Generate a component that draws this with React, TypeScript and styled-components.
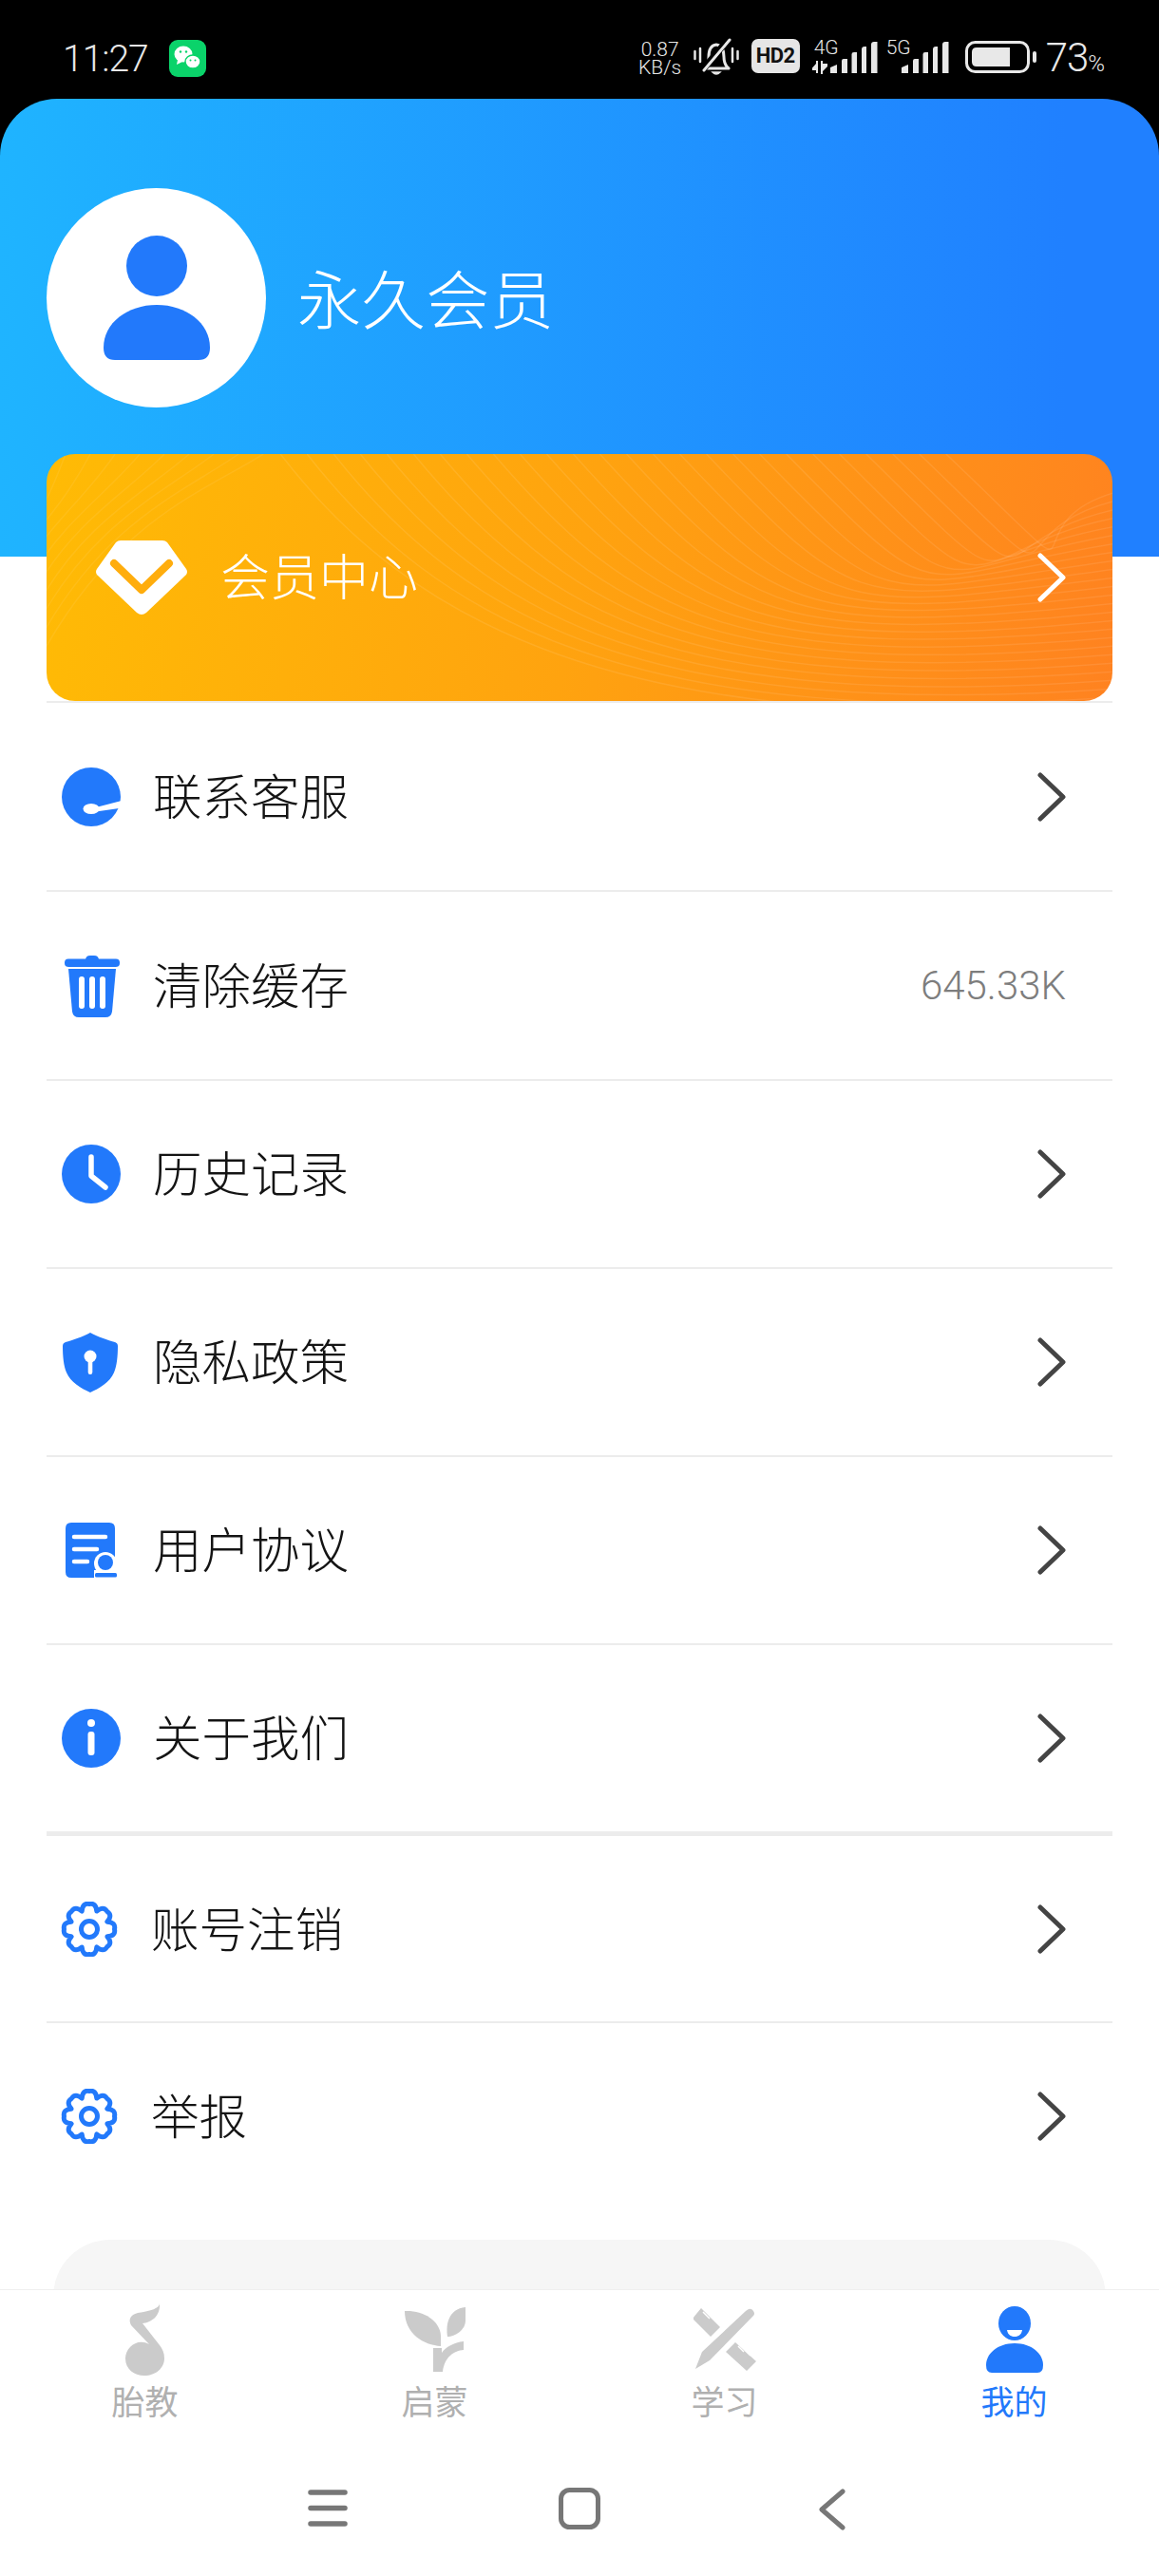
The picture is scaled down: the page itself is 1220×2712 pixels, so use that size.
import React from 'react';
import styled, { createGlobalStyle } from 'styled-components';

const BLUE = '#2279fb';
const CJK = `Roboto, "Noto Sans CJK SC", sans-serif`;

const Global = createGlobalStyle`
  html, body { margin: 0; padding: 0; background: #fff; }
  * { box-sizing: border-box; }
`;

const Page = styled.div`
  width: 1220px;
  height: 2712px;
  display: flex;
  flex-direction: column;
  overflow: hidden;
  background: #000;
  font-family: ${CJK};
`;

const StatusBar = styled.div`
  height: 104px;
  flex: none;
  display: flex;
  align-items: flex-start;
  justify-content: space-between;
  padding: 40px 57px 0 66px;
  color: #e8e8e8;
`;
const StatusLeft = styled.div`
  display: flex;
  align-items: center;
  gap: 22px;
`;
const Clock = styled.span`
  font-size: 39px;
  font-weight: 300;
  line-height: 40px;
  letter-spacing: -1px;
  margin-top: 2px;
`;
const StatusRight = styled.div`
  display: flex;
  align-items: flex-start;
`;
const Speed = styled.div`
  width: 46px;
  font-size: 21px;
  font-weight: 300;
  line-height: 19px;
  text-align: center;
  margin-top: 3px;
  margin-right: 12px;
`;
const HdBadge = styled.div`
  width: 51px;
  height: 36px;
  border-radius: 7px;
  background: #e6e6e6;
  color: #111;
  font-size: 22px;
  font-weight: 700;
  line-height: 36px;
  text-align: center;
  margin: 1px 13px 0 13px;
  letter-spacing: -0.5px;
`;
const SignalGroup = styled.div`
  position: relative;
  display: flex;
  width: ${p => p.$w}px;
  height: 38px;
  margin-right: ${p => p.$mr}px;
`;
const SignalLabel = styled.span`
  position: absolute;
  left: ${p => p.$left}px;
  top: 0;
  font-size: 21px;
  font-weight: 300;
  line-height: 20px;
`;
const Percent = styled.span`
  font-size: 42px;
  font-weight: 300;
  line-height: 42px;
  margin-left: 9px;
  letter-spacing: -1px;
  small {
    font-size: 24px;
    letter-spacing: 0;
  }
`;

const Main = styled.div`
  flex: 1;
  min-height: 0;
  overflow: hidden;
  background: #fff;
  display: flex;
  flex-direction: column;
`;
const HeaderBack = styled.div`
  background: #000;
  flex: none;
  height: 482px;
`;
const HeaderBody = styled.div`
  height: 482px;
  background: linear-gradient(90deg, #1fb4ff 0%, #2080ff 92%);
  border-radius: 60px 60px 0 0;
  padding: 94px 49px 0;
  display: flex;
  align-items: flex-start;
  gap: 33px;
`;
const Avatar = styled.div`
  width: 231px;
  height: 231px;
  flex: none;
  border-radius: 50%;
  background: #fff;
  display: flex;
  align-items: center;
  justify-content: center;
`;
const UserName = styled.div`
  color: #fff;
  font-size: 67.5px;
  line-height: 90px;
  font-weight: 300;
  margin-top: 75px;
`;
const VipCard = styled.div`
  position: relative;
  flex: none;
  height: 260px;
  margin: -108px 49px 0 49px;
  border-radius: 30px;
  overflow: hidden;
  background: linear-gradient(100deg, #ffbb05 0%, #ffa30f 50%, #ff8220 100%);
  display: flex;
  align-items: center;
  padding: 0 49px 0 51px;
  color: #fff;
`;
const CardPattern = styled.svg`
  position: absolute;
  inset: 0;
  width: 100%;
  height: 100%;
`;
const VipTitle = styled.span`
  position: relative;
  font-size: 52px;
  font-weight: 300;
  line-height: 60px;
  margin-left: 34px;
  flex: 1;
  padding-top: 3px;
`;
const List = styled.div`
  display: flex;
  flex-direction: column;
  padding: 0 49px;
`;
const Row = styled.div`
  height: ${p => p.$h}px;
  flex: none;
  display: flex;
  align-items: center;
  border-top: ${p => p.$line}px solid #ececec;
  padding-right: 49px;
  color: #141414;
`;
const IconSlot = styled.div`
  width: ${p => p.$w}px;
  flex: none;
  display: flex;
  padding-left: ${p => p.$pl}px;
`;
const RowLabel = styled.span`
  flex: 1;
  font-size: ${p => p.$size}px;
  font-weight: 300;
  line-height: 70px;
  padding-top: 4px;
`;
const RowValue = styled.span`
  font-size: 42px;
  font-weight: 300;
  color: #7d7d7d;
`;
const Teaser = styled.div`
  flex: none;
  height: 60px;
  margin: 32px 56px 0;
  border-radius: 70px 70px 0 0;
  background: #f6f6f6;
`;
const TabBar = styled.div`
  flex: none;
  height: 142px;
  background: #fff;
  border-top: 1px solid #efefef;
  display: grid;
  grid-template-columns: repeat(4, 1fr);
`;
const Tab = styled.div`
  display: flex;
  flex-direction: column;
  align-items: center;
  padding-top: 13px;
  color: ${p => (p.$active ? BLUE : '#b0b0b0')};
`;
const TabIcon = styled.div`
  height: 78px;
  display: flex;
  align-items: center;
  justify-content: center;
`;
const TabLabel = styled.span`
  font-size: 35px;
  line-height: 44px;
  font-weight: 400;
  margin-top: 7px;
`;
const NavBar = styled.div`
  flex: none;
  height: 160px;
  background: #fff;
  display: flex;
  align-items: flex-start;
  padding: 68px 0 0 324px;
`;
const NavIcon = styled.svg`
  display: block;
  flex: none;
  margin-left: ${p => p.$ml}px;
  margin-top: ${p => p.$mt}px;
`;
const ChevronSvg = styled.svg`
  position: relative;
  flex: none;
`;
const GemSvg = styled.svg`
  position: relative;
  flex: none;
`;

const Chevron = ({ color }: { color: string }) => (
  <ChevronSvg width="30" height="52" viewBox="0 0 30 52">
    <path d="M3 3 L27 26 L3 49" fill="none" stroke={color} strokeWidth="5" strokeLinecap="round" strokeLinejoin="round" />
  </ChevronSvg>
);

const WeChat = () => (
  <svg width="39" height="39" viewBox="0 0 39 39">
    <rect width="39" height="39" rx="9" fill="#0ad36a" />
    <ellipse cx="15" cy="15" rx="9.5" ry="8.5" fill="#fff" />
    <path d="M9 21 L8 26 L14 23Z" fill="#fff" />
    <ellipse cx="25" cy="23" rx="8" ry="7" fill="#fff" stroke="#0ad36a" strokeWidth="1.5" />
    <circle cx="12" cy="12.5" r="1.2" fill="#0ad36a" />
    <circle cx="18" cy="12.5" r="1.2" fill="#0ad36a" />
    <circle cx="22.5" cy="21.5" r="1" fill="#0ad36a" />
    <circle cx="27.5" cy="21.5" r="1" fill="#0ad36a" />
  </svg>
);

const MutedBell = () => (
  <svg width="48" height="42" viewBox="0 0 48 42" fill="none" stroke="#e8e8e8">
    <path d="M1.500 14v8M7 11v14M41 11v14M46.500 14v8" strokeWidth="2.500" strokeLinecap="round" />
    <path d="M13 32 Q16 28 16 20 Q16 8 24 7 Q32 8 32 20 Q32 28 37 32 Z" strokeWidth="3" strokeLinejoin="round" />
    <path d="M20 36 Q24 40 28 36Z" fill="#e8e8e8" strokeWidth="1.500" />
    <path d="M37 1 L10 33" stroke="#000" strokeWidth="7" />
    <path d="M38 2 L11 34" strokeWidth="3" strokeLinecap="round" />
  </svg>
);

const BarsSvg = styled.svg`
  position: absolute;
  right: 0;
  top: 4px;
`;
const ArrowsSvg = styled.svg`
  position: absolute;
  left: 0;
  top: 24px;
`;
const BatterySvg = styled.svg`
  margin-top: 3px;
`;

const Bars = () => (
  <BarsSvg width="52" height="34" viewBox="0 0 52 34">
    <path d="M1 33V27L8 24V33Z M13 33V20Q13 18 15 18H19V33Z M23.500 33V13Q23.500 11 26 11H29V33Z M34 33V8Q34 5 37 5H39V33Z M44 33V3Q44 0 47 0H50.500V33Z" fill="#e8e8e8" />
  </BarsSvg>
);

const Arrows = () => (
  <ArrowsSvg width="16" height="14" viewBox="0 0 16 14">
    <path d="M6 0V13H4V10H0V7.500L4 3V0ZM9 0H11V3H16V6L11 11V14H9Z" fill="#e8e8e8" />
  </ArrowsSvg>
);

const Battery = () => (
  <BatterySvg width="76" height="34" viewBox="0 0 76 34">
    <rect x="1.500" y="1.500" width="65" height="31" rx="9" fill="none" stroke="#e8e8e8" strokeWidth="3" />
    <path d="M7 12Q7 7 12 7H47V27H12Q7 27 7 22Z" fill="#e8e8e8" />
    <rect x="71" y="11" width="4" height="12" rx="2" fill="#e8e8e8" />
  </BatterySvg>
);

const Person = () => (
  <svg width="112" height="131" viewBox="0 0 112 131">
    <circle cx="56" cy="32" r="32" fill={BLUE} />
    <path d="M0 118 C0 92 25 73 56 73 C87 73 112 92 112 118 Q112 131 100 131 H12 Q0 131 0 118Z" fill={BLUE} />
  </svg>
);

const VipGem = () => (
  <GemSvg width="98" height="80" viewBox="0 0 98 80">
    <path d="M27 1 H71 Q74 1 76 3 L96 31 Q98 34 96 37 L54 77 Q49 81 44 77 L2 37 Q0 34 2 31 L22 3 Q24 1 27 1Z" fill="#fff" />
    <path d="M20 25 L49 53 L78 25" fill="none" stroke="#ffad0d" strokeWidth="8" strokeLinecap="round" strokeLinejoin="round" />
  </GemSvg>
);

const IconSpoon = () => (
  <svg width="62" height="62" viewBox="0 0 62 62">
    <circle cx="31" cy="31" r="31" fill={BLUE} />
    <ellipse cx="31" cy="43.500" rx="8.500" ry="5.500" fill="#fff" />
    <path d="M36 42 L63 35 V42.500 L36 46.500Z" fill="#fff" />
  </svg>
);
const IconTrash = () => (
  <svg width="58" height="66" viewBox="0 0 58 66">
    <path d="M22 6 Q22 1 27 1 H31 Q36 1 36 6Z" fill={BLUE} />
    <rect y="4.500" width="58" height="8.500" rx="4" fill={BLUE} />
    <path d="M4 15 H54 L50 60 Q49 66 43 66 H15 Q9 66 8 60Z" fill={BLUE} />
    <rect x="15" y="23" width="6" height="34" rx="3" fill="#fff" />
    <rect x="26" y="23" width="6" height="34" rx="3" fill="#fff" />
    <rect x="37" y="23" width="6" height="34" rx="3" fill="#fff" />
  </svg>
);
const IconClock = () => (
  <svg width="62" height="62" viewBox="0 0 62 62">
    <circle cx="31" cy="31" r="31" fill={BLUE} />
    <path d="M31 13 V33 L46 45" fill="none" stroke="#fff" strokeWidth="5.500" strokeLinecap="round" strokeLinejoin="round" />
  </svg>
);
const IconShield = () => (
  <svg width="58" height="63" viewBox="0 0 58 63">
    <path d="M29 0 C36 4 48 8 55 10 Q58 11 58 14 C58 25 57 35 54 42 C50 52 38 59 29 63 C20 59 8 52 4 42 C1 35 0 25 0 14 Q0 11 3 10 C10 8 22 4 29 0Z" fill={BLUE} />
    <circle cx="29" cy="25" r="6.500" fill="#fff" />
    <rect x="26.700" y="26" width="4.600" height="18" rx="2.300" fill="#fff" />
  </svg>
);
const IconDoc = () => (
  <svg width="54" height="58" viewBox="0 0 54 58">
    <path d="M6 0 H46 Q52 0 52 6 V36 H36 L30 58 H6 Q0 58 0 52 V6 Q0 0 6 0Z" fill={BLUE} />
    <path d="M9 15 H42 M9 28 H33 M9 41 H23" stroke="#fff" strokeWidth="4.500" strokeLinecap="round" />
    <circle cx="42" cy="43" r="12" fill="#fff" />
    <circle cx="42" cy="42" r="8" fill={BLUE} />
    <rect x="30" y="50" width="24" height="8" fill="#fff" />
    <rect x="31" y="53" width="23" height="4.500" rx="1.500" fill={BLUE} />
  </svg>
);
const IconInfo = () => (
  <svg width="62" height="62" viewBox="0 0 62 62">
    <circle cx="31" cy="31" r="31" fill={BLUE} />
    <circle cx="31" cy="15" r="4" fill="#fff" />
    <rect x="27.500" y="24" width="7" height="25" rx="3" fill="#fff" />
  </svg>
);
const IconGear = () => {
  const pt = (r: number, d: number) => {
    const t = (d * Math.PI) / 180;
    return `${(30 + r * Math.cos(t)).toFixed(1)} ${(29 + r * Math.sin(t)).toFixed(1)}`;
  };
  let d = `M${pt(20.5, -22.5 - 90)}`;
  for (let i = 0; i < 8; i += 1) {
    const a = i * 45 - 90;
    d += ` Q${pt(29, a - 14)} ${pt(26.5, a)} Q${pt(29, a + 14)} ${pt(20.5, a + 22.5)}`;
  }
  return (
    <svg width="60" height="58" viewBox="0 0 60 58">
      <path d={`${d}Z`} fill="none" stroke={BLUE} strokeWidth="5" strokeLinejoin="round" />
      <circle cx="30" cy="29" r="8.500" fill="none" stroke={BLUE} strokeWidth="5" />
    </svg>
  );
};

const TabNote = () => (
  <svg width="44" height="76" viewBox="0 0 44 76">
    <path d="M37 0 C37 5 28 8 14 10 C6 12 4 17 7 23 L26 43 C14 36 1 46 1 58 C1 69 10 76 21 76 C33 76 42 68 42 58 C42 52 40 48 37 44 L19 21 C28 20 38 14 37 0Z" fill="#cbcbcb" />
  </svg>
);
const TabSprout = () => (
  <svg width="64" height="68" viewBox="0 0 64 68">
    <path d="M0 4 C18 3 37 13 38 30 L38 41 C20 40 0 28 0 4Z" fill="#cbcbcb" />
    <path d="M64 0 V14 C64 24 53 31 45 31 C43 18 46 2 64 0Z" fill="#cbcbcb" />
    <path d="M30 68 V43 L39 43 V48 C43 42 52 37 62 36 V45 C52 46 42 52 40 68Z" fill="#cbcbcb" />
  </svg>
);
const TabStudy = () => (
  <svg width="66" height="66" viewBox="0 0 66 66">
    <path d="M8 0 L28 20 L18 30 L-1 11Z M44 36 L66 56 L56 66 L34 46Z" fill="#cbcbcb" />
    <path d="M58 1 Q61 0 63 3 Q65 6 63 8 L17 55 L2 64 L9 46 L55 3Z" fill="#cbcbcb" />
    <path d="M10 4 L17 11 M16 1 L21 8 M47 40 L53 46 M54 44 L60 50" stroke="#fff" strokeWidth="1.500" />
  </svg>
);
const TabPerson = () => (
  <svg width="60" height="70" viewBox="0 0 60 70">
    <ellipse cx="30" cy="18" rx="17" ry="18" fill={BLUE} />
    <path d="M22 25 H38 C37 31 33 32 30 32 C27 32 23 31 22 25Z" fill="#fff" />
    <path d="M0 62 C0 50 12 39 30 39 C48 39 60 50 60 62 Q60 70 54 70 H6 Q0 70 0 62Z" fill={BLUE} />
  </svg>
);

const rows = [
  { label: '联系客服', Icon: IconSpoon, pl: 16, h: 199, line: 2, size: 51.5, w: 112 },
  { label: '清除缓存', Icon: IconTrash, pl: 19, h: 199, line: 2, size: 51.5, w: 112, value: '645.33K' },
  { label: '历史记录', Icon: IconClock, pl: 16, h: 198, line: 2, size: 51.5, w: 112 },
  { label: '隐私政策', Icon: IconShield, pl: 17, h: 198, line: 2, size: 51.5, w: 112 },
  { label: '用户协议', Icon: IconDoc, pl: 20, h: 198, line: 2, size: 51.5, w: 112 },
  { label: '关于我们', Icon: IconInfo, pl: 16, h: 198, line: 2, size: 51.5, w: 112 },
  { label: '账号注销', Icon: IconGear, pl: 15, h: 200, line: 5, size: 50.5, w: 110 },
  { label: '举报', Icon: IconGear, pl: 15, h: 198, line: 2, size: 50.5, w: 110 },
];

const arcs = Array.from({ length: 26 }, (_, i) => i);

export default function App() {
  return (
    <Page>
      <Global />
      <StatusBar>
        <StatusLeft>
          <Clock>11:27</Clock>
          <WeChat />
        </StatusLeft>
        <StatusRight>
          <Speed>0.87<br />KB/s</Speed>
          <MutedBell />
          <HdBadge>HD2</HdBadge>
          <SignalGroup $w={70} $mr={8}>
            <SignalLabel $left={2}>4G</SignalLabel>
            <Arrows />
            <Bars />
          </SignalGroup>
          <SignalGroup $w={67} $mr={16}>
            <SignalLabel $left={0}>5G</SignalLabel>
            <Bars />
          </SignalGroup>
          <Battery />
          <Percent>73<small>%</small></Percent>
        </StatusRight>
      </StatusBar>
      <Main>
        <HeaderBack>
          <HeaderBody>
            <Avatar><Person /></Avatar>
            <UserName>永久会员</UserName>
          </HeaderBody>
        </HeaderBack>
        <VipCard>
          <CardPattern viewBox="0 0 1121 260" preserveAspectRatio="none">
            {arcs.map(i => (
              <path
                key={i}
                d={`M${246 + i * 28} 0 C ${380 + i * 30} 175, ${600 + i * 16} ${300 - i * 9}, 1125 ${265 - i * 9}`}
                fill="none"
                stroke="#fff"
                strokeOpacity="0.09"
                strokeWidth="1.500"
              />
            ))}
            {arcs.slice(0, 9).map(i => (
              <path key={i} d={`M${i * 26 + 20} 0 C ${i * 20 + 5} 40, ${i * 10 - 10} 70, -10 ${60 + i * 20}`} fill="none" stroke="#fff" strokeOpacity="0.07" strokeWidth="1.500" />
            ))}
          </CardPattern>
          <VipGem />
          <VipTitle>会员中心</VipTitle>
          <Chevron color="#fff" />
        </VipCard>
        <List>
          {rows.map(r => (
            <Row key={r.label} $h={r.h} $line={r.line}>
              <IconSlot $w={r.w} $pl={r.pl}><r.Icon /></IconSlot>
              <RowLabel $size={r.size}>{r.label}</RowLabel>
              {r.value ? <RowValue>{r.value}</RowValue> : <Chevron color="#444" />}
            </Row>
          ))}
        </List>
        <Teaser />
      </Main>
      <TabBar>
        <Tab><TabIcon><TabNote /></TabIcon><TabLabel>胎教</TabLabel></Tab>
        <Tab><TabIcon><TabSprout /></TabIcon><TabLabel>启蒙</TabLabel></Tab>
        <Tab><TabIcon><TabStudy /></TabIcon><TabLabel>学习</TabLabel></Tab>
        <Tab $active><TabIcon><TabPerson /></TabIcon><TabLabel>我的</TabLabel></Tab>
      </TabBar>
      <NavBar>
        <NavIcon $ml={0} $mt={0} width="42" height="40" viewBox="0 0 42 40">
          <path d="M3 4 H39 M3 20.500 H39 M3 37 H39" stroke="#777" strokeWidth="5.500" strokeLinecap="round" />
        </NavIcon>
        <NavIcon $ml={222} $mt={-1} width="44" height="44" viewBox="0 0 44 44">
          <rect x="2.500" y="2.500" width="39" height="39" rx="9" fill="none" stroke="#777" strokeWidth="5" />
        </NavIcon>
        <NavIcon $ml={229} $mt={0} width="30" height="44" viewBox="0 0 30 44">
          <path d="M26 3 L4 22 L26 41" fill="none" stroke="#777" strokeWidth="5" strokeLinecap="round" strokeLinejoin="round" />
        </NavIcon>
      </NavBar>
    </Page>
  );
}
